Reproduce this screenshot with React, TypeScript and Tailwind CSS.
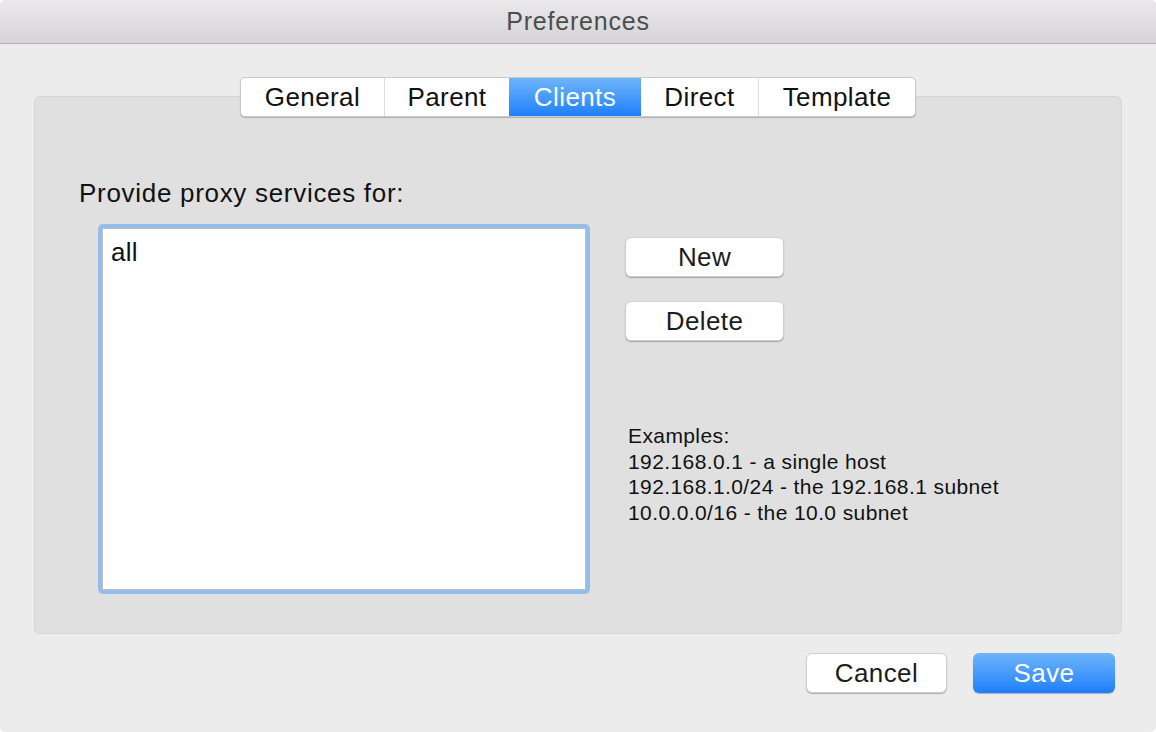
const tabs = ['General', 'Parent', 'Clients', 'Direct', 'Template']
const tabWidths = ['w-[143px]', 'w-[125px]', 'w-[132px]', 'w-[117px]', 'w-[157px]']

const examples = [
  'Examples:',
  '192.168.0.1 - a single host',
  '192.168.1.0/24 - the 192.168.1 subnet',
  '10.0.0.0/16 - the 10.0 subnet',
]

function PushButton({ label, className }: { label: string; className: string }) {
  return (
    <button
      className={`flex h-[40px] items-center justify-center rounded-[6px] border border-[#cfcfcf] bg-white text-[26px] tracking-[0.4px] text-[#1c1c1c] shadow-[0_1px_1px_rgba(0,0,0,0.28)] ${className}`}
    >
      {label}
    </button>
  )
}

export default function App() {
  return (
    <div className="h-[732px] w-[1156px] overflow-hidden rounded-[5px] bg-[#ececec] font-['Liberation_Sans',Arial,sans-serif] text-black">
      {/* title bar */}
      <div className="flex h-[44px] items-center justify-center border-b border-[#b1b1b1] bg-gradient-to-b from-[#ebe9eb] to-[#d5d3d5] pt-[1px] text-[25px] tracking-[0.8px] text-[#4d4d4d]">
        Preferences
      </div>

      <div className="px-[34px] pt-[33px]">
        {/* tab strip */}
        <div className="relative z-10 flex justify-center">
          <div className="flex h-[40px] overflow-hidden rounded-[5px] border border-[#c9c9c9] bg-white shadow-[0_1px_1px_rgba(0,0,0,0.22)]">
            {tabs.map((t, i) => (
              <div
                key={t}
                className={`flex items-center justify-center text-[26px] tracking-[0.4px] ${tabWidths[i]} ${
                  t === 'Clients'
                    ? 'bg-gradient-to-b from-[#6db4fa] to-[#1a7ffb] text-white'
                    : 'text-[#111]'
                } ${i > 0 && t !== 'Clients' && tabs[i - 1] !== 'Clients' ? 'border-l border-[#dcdcdc]' : ''}`}
              >
                {t}
              </div>
            ))}
          </div>
        </div>

        {/* group box */}
        <div className="-mt-[21px] h-[538px] rounded-[6px] border border-[#d5d5d5] bg-[#e0e0e0] pl-[44px] pt-[81px]">
          <div className="text-[26px] leading-[30px] tracking-[0.7px] text-[#111]">Provide proxy services for:</div>

          <div className="mt-[16px] flex">
            <div className="ml-[19px] h-[370px] w-[492px] rounded-[5px] bg-[#93bdeb] p-[4px]">
              <div className="h-full w-full border border-[#bfbfbf] bg-white px-[8px] pt-[8px] text-[26px] leading-[30px] tracking-[0.3px] text-[#111]">
                all
              </div>
            </div>

            <div className="ml-[35px] flex flex-col">
              <div className="mt-[13px] flex flex-col gap-[24px]">
                <PushButton label="New" className="w-[159px]" />
                <PushButton label="Delete" className="w-[159px]" />
              </div>
              <div className="ml-[3px] mt-[82px] text-[21px] leading-[25.5px] tracking-[0.4px] text-[#111]">
                {examples.map((l) => (
                  <div key={l}>{l}</div>
                ))}
              </div>
            </div>
          </div>
        </div>

        {/* bottom buttons */}
        <div className="mt-[19px] flex justify-end gap-[26px] pr-[7px]">
          <PushButton label="Cancel" className="w-[141px]" />
          <button className="flex h-[40px] w-[142px] items-center justify-center rounded-[6px] bg-gradient-to-b from-[#6db4fa] to-[#1a7ffb] text-[26px] tracking-[0.4px] text-white shadow-[0_1px_1px_rgba(0,0,0,0.25)]">
            Save
          </button>
        </div>
      </div>
    </div>
  )
}
